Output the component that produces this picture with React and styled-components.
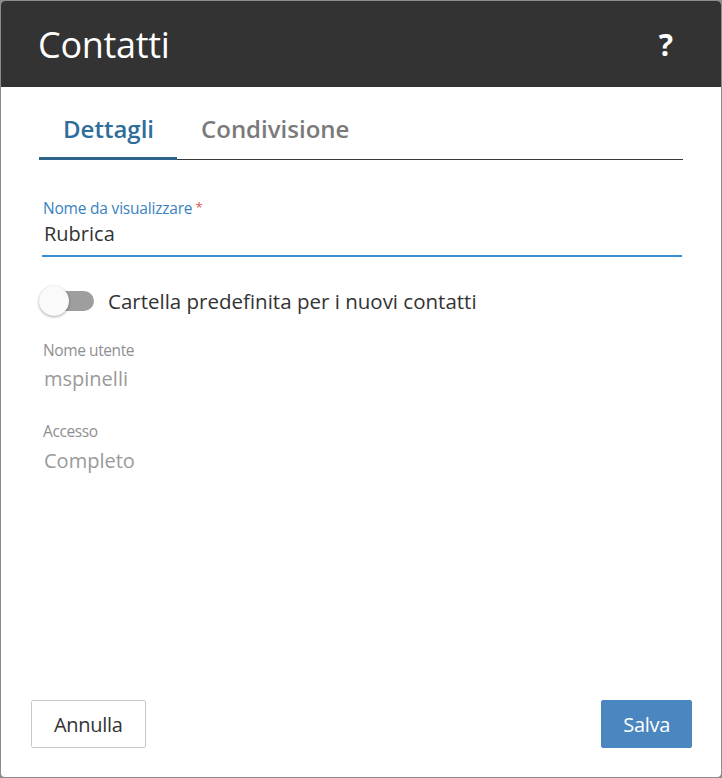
import { useState } from 'react';
import styled, { createGlobalStyle } from 'styled-components';

const GlobalStyle = createGlobalStyle`
    html, body {
        margin: 0;
        padding: 0;
        background: #8c8c8c;
        font-family: "Open Sans", "Noto Sans", sans-serif;
    }
`;

const Dialog = styled.div`
    margin: 1px 1px 0 1px;
    width: 720px;
    height: 776px;
    background: #ffffff;
    border-radius: 4px;
    overflow: hidden;
    display: flex;
    flex-direction: column;
`;

const Header = styled.header`
    height: 86px;
    flex-shrink: 0;
    background: #333333;
    color: #ffffff;
    display: flex;
    align-items: center;
    justify-content: space-between;
    padding: 0 48px 0 38px;
`;

const Title = styled.h1`
    margin: 0 0 0 -1px;
    font-size: 36px;
    font-weight: 400;
    letter-spacing: -0.3px;
`;

const HelpButton = styled.button`
    background: none;
    border: 0;
    color: #ffffff;
    font-family: inherit;
    font-size: 30px;
    font-weight: 700;
    padding: 0;
    cursor: pointer;
`;

const Body = styled.div`
    flex: 1;
    padding: 0 38px 0 38px;
`;

const Tabs = styled.div`
    display: flex;
    height: 72px;
    border-bottom: 1px solid #3a3a3a;
`;

const Tab = styled.button`
    background: none;
    border: 0;
    border-bottom: 3px solid ${p => (p.$active ? '#2d6289' : 'transparent')};
    margin-bottom: -1px;
    padding: 12px 23px 0 24px;
    font-family: inherit;
    font-size: 24px;
    font-weight: 600;
    color: ${p => (p.$active ? '#2f6d9b' : '#7a7a7a')};
    cursor: pointer;
`;

const Field = styled.div`
    margin-top: ${p => p.$top || 0}px;
    padding-left: 4px;
`;

const Label = styled.label`
    display: block;
    font-size: 15.5px;
    line-height: 20px;
    color: ${p => (p.$focus ? '#3a82bf' : '#8f8f8f')};
    letter-spacing: ${p => (p.$focus ? '-0.2px' : '-0.4px')};
`;

const Required = styled.span`
    color: #d9534f;
    margin-left: 3px;
    font-size: 13px;
    vertical-align: 2px;
`;

const TextInput = styled.input`
    display: block;
    width: 100%;
    box-sizing: border-box;
    margin: 2px 0 0 -1px;
    padding: 0 0 8px 2px;
    border: 0;
    border-bottom: 2.5px solid #3b8dd0;
    font-family: inherit;
    font-size: 20px;
    line-height: 27px;
    color: #333333;
    outline: none;
    caret-color: #111;
`;

const Value = styled.div`
    margin-top: ${p => p.$top || 6}px;
    font-size: 20px;
    color: #9a9a9a;
    line-height: 26px;
    padding-left: 1px;
`;

const ToggleRow = styled.label`
    display: flex;
    align-items: center;
    gap: 14px;
    margin-top: 29px;
    font-size: 20.5px;
    line-height: 30px;
    color: #333333;
    cursor: pointer;
`;

const Switch = styled.span`
    position: relative;
    width: 55px;
    height: 30px;
    flex-shrink: 0;
`;

const Track = styled.span`
    position: absolute;
    left: 6px;
    right: 0;
    top: 5px;
    height: 20px;
    border-radius: 10px;
    background: ${p => (p.$on ? '#7fb1dc' : '#9e9e9e')};
`;

const Knob = styled.span`
    position: absolute;
    top: 0;
    left: ${p => (p.$on ? 25 : 0)}px;
    width: 30px;
    height: 30px;
    border-radius: 50%;
    background: ${p => (p.$on ? '#3b8dd0' : '#fafafa')};
    box-shadow: 0 1px 3px rgba(0, 0, 0, 0.35);
`;

const Footer = styled.footer`
    display: flex;
    justify-content: space-between;
    align-items: center;
    padding: 0 29px 29px 30px;
`;

const Button = styled.button`
    height: 48px;
    padding: 0 ${p => (p.$primary ? 21 : 22)}px;
    border-radius: 2px;
    font-family: inherit;
    font-size: 20px;
    letter-spacing: -0.3px;
    cursor: pointer;
    border: 1px solid ${p => (p.$primary ? '#4a86bf' : '#c8c8c8')};
    background: ${p => (p.$primary ? '#4a86bf' : '#ffffff')};
    color: ${p => (p.$primary ? '#ffffff' : '#333333')};
`;

function App() {
    const [tab, setTab] = useState('details');
    const [name, setName] = useState('Rubrica');
    const [isDefault, setIsDefault] = useState(false);

    return (
        <>
            <GlobalStyle />
            <Dialog>
                <Header>
                    <Title>Contatti</Title>
                    <HelpButton>?</HelpButton>
                </Header>

                <Body>
                    <Tabs>
                        <Tab $active={tab === 'details'} onClick={() => setTab('details')}>
                            Dettagli
                        </Tab>
                        <Tab $active={tab === 'sharing'} onClick={() => setTab('sharing')}>
                            Condivisione
                        </Tab>
                    </Tabs>

                    <Field $top={37}>
                        <Label $focus htmlFor="displayName">
                            Nome da visualizzare<Required>*</Required>
                        </Label>
                        <TextInput
                            id="displayName"
                            value={name}
                            onChange={e => setName(e.target.value)}
                            autoFocus
                        />
                    </Field>

                    <ToggleRow onClick={() => setIsDefault(v => !v)}>
                        <Switch>
                            <Track $on={isDefault} />
                            <Knob $on={isDefault} />
                        </Switch>
                        Cartella predefinita per i nuovi contatti
                    </ToggleRow>

                    <Field $top={24}>
                        <Label>Nome utente</Label>
                        <Value>mspinelli</Value>
                    </Field>

                    <Field $top={29}>
                        <Label>Accesso</Label>
                        <Value $top={7}>Completo</Value>
                    </Field>
                </Body>

                <Footer>
                    <Button>Annulla</Button>
                    <Button $primary>Salva</Button>
                </Footer>
            </Dialog>
        </>
    );
}

export default App;
